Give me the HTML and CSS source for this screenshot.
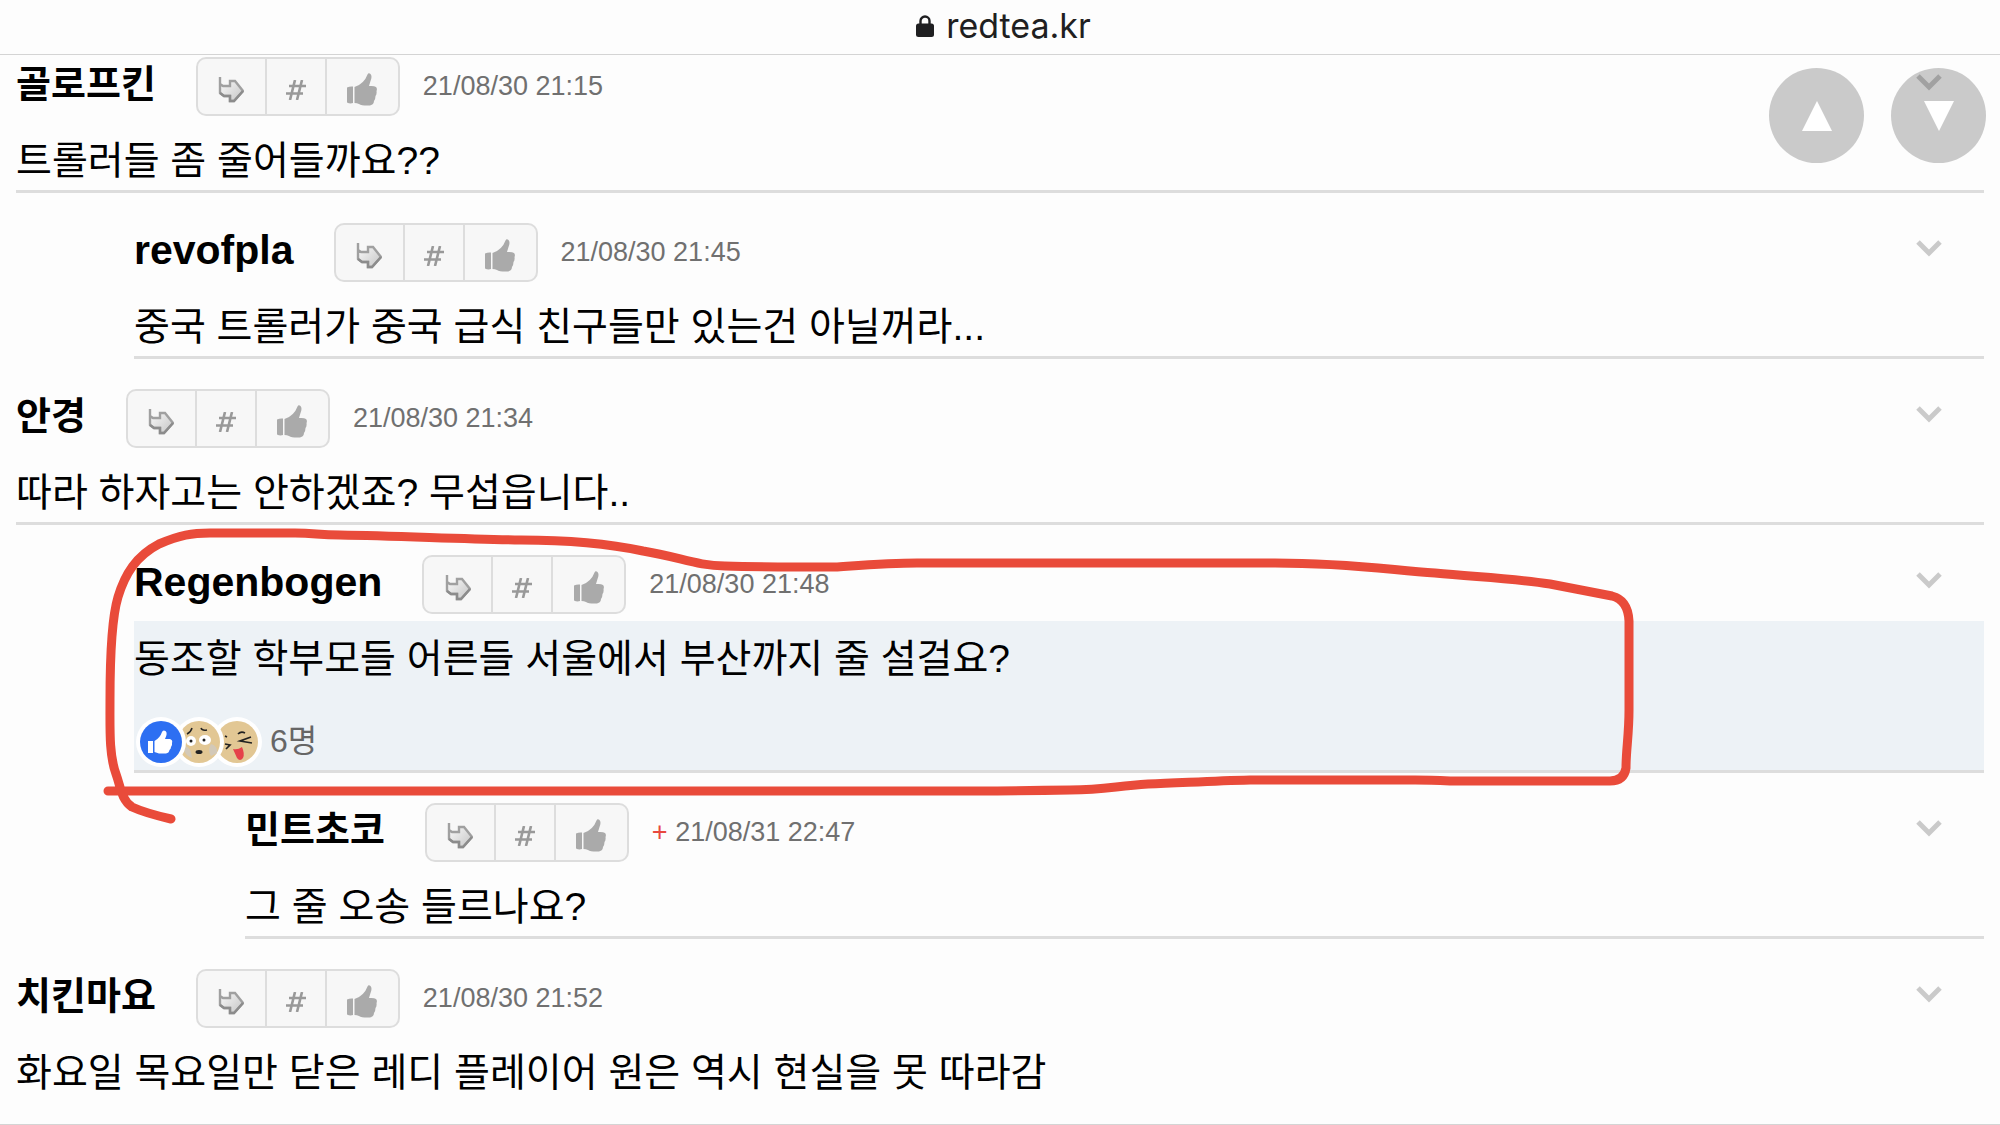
FILE: index.html
```html
<!DOCTYPE html>
<html lang="ko">
<head>
  <meta charset="UTF-8">
  <meta name="viewport" content="width=device-width, initial-scale=1.0">
  <title>redtea.kr</title>
  <link rel="stylesheet" href="styles.css">
</head>
<body>
  <!-- shared icons -->
  <svg class="sprite" aria-hidden="true">
    <defs>
      <linearGradient id="arrow-fill" x1="0" y1="0" x2="1" y2="1">
        <stop offset="0" stop-color="#ffffff"/>
        <stop offset="1" stop-color="#c4c4c4"/>
      </linearGradient>
    </defs>
    <symbol id="icon-reply" viewBox="0 0 26 26">
      <path d="M2 0V16L6 19H12V24H16L25 14L17 4H12V9H5L2 7Z" fill="url(#arrow-fill)" stroke="#a0a0a0" stroke-width="2.4"/>
      <path d="M2 16L6 19H12V24H16L25 14" fill="none" stroke="#8c8c8c" stroke-width="2.4"/>
    </symbol>
    <symbol id="icon-hash" viewBox="0 0 20 20">
      <path d="M9 0L4 20M16 0L11 20M3 6H20M0 13.500H17" fill="none" stroke="#999" stroke-width="2.6"/>
    </symbol>
    <symbol id="icon-thumb" viewBox="0 0 30 33">
      <path d="M0 14.500Q3 13 6 13.500V30Q3 31 0 29.500Z"/>
      <path d="M7.500 14Q17 11 20.500 1.500Q21.500 -.5 23.500 1Q25.500 3 23.500 8L22 13Q27 12.500 29 14Q30.500 15.500 29.500 18Q30 21 28.500 23Q28.500 26 27 28Q27 31.500 23 32.500Q15 33 12 31Q10 30 7.500 30Z"/>
    </symbol>
    <symbol id="icon-chevron" viewBox="0 0 26 17">
      <path d="M2 2L13 13L24 2" fill="none" stroke="currentColor" stroke-width="5"/>
    </symbol>
  </svg>

  <header class="address-bar">
    <svg class="lock" viewBox="0 0 18 22" aria-hidden="true">
      <path d="M4.500 10V6a4.500 4.500 0 0 1 9 0v4" fill="none" stroke="#1f1f21" stroke-width="2.4"/>
      <rect x="0" y="8.500" width="18" height="13.500" rx="2.500" fill="#1f1f21"/>
    </svg>
    <span>redtea.kr</span>
  </header>

  <nav class="scroll-buttons">
    <button type="button" aria-label="위로"><svg viewBox="0 0 30 30"><path d="M15 0L30 30H0Z"/></svg></button>
    <button type="button" aria-label="아래로"><svg viewBox="0 0 30 30"><path d="M0 0H30L15 30Z"/></svg></button>
  </nav>

  <main class="comments">
    <article class="comment">
      <div class="comment-head">
        <strong class="name">골로프킨</strong>
        <div class="actions">
          <button type="button" class="reply" aria-label="답글"><svg><use href="#icon-reply"/></svg></button>
          <button type="button" class="hash" aria-label="링크"><svg><use href="#icon-hash"/></svg></button>
          <button type="button" class="like" aria-label="추천"><svg><use href="#icon-thumb"/></svg></button>
        </div>
        <time>21/08/30 21:15</time>
        <button type="button" class="more" aria-label="더보기"><svg><use href="#icon-chevron"/></svg></button>
      </div>
      <div class="comment-body"><p>트롤러들 좀 줄어들까요??</p></div>
    </article>

    <article class="comment depth-1">
      <div class="comment-head">
        <strong class="name" lang="en">revofpla</strong>
        <div class="actions">
          <button type="button" class="reply" aria-label="답글"><svg><use href="#icon-reply"/></svg></button>
          <button type="button" class="hash" aria-label="링크"><svg><use href="#icon-hash"/></svg></button>
          <button type="button" class="like" aria-label="추천"><svg><use href="#icon-thumb"/></svg></button>
        </div>
        <time>21/08/30 21:45</time>
        <button type="button" class="more" aria-label="더보기"><svg><use href="#icon-chevron"/></svg></button>
      </div>
      <div class="comment-body"><p>중국 트롤러가 중국 급식 친구들만 있는건 아닐꺼라...</p></div>
    </article>

    <article class="comment">
      <div class="comment-head">
        <strong class="name">안경</strong>
        <div class="actions">
          <button type="button" class="reply" aria-label="답글"><svg><use href="#icon-reply"/></svg></button>
          <button type="button" class="hash" aria-label="링크"><svg><use href="#icon-hash"/></svg></button>
          <button type="button" class="like" aria-label="추천"><svg><use href="#icon-thumb"/></svg></button>
        </div>
        <time>21/08/30 21:34</time>
        <button type="button" class="more" aria-label="더보기"><svg><use href="#icon-chevron"/></svg></button>
      </div>
      <div class="comment-body"><p>따라 하자고는 안하겠죠? 무섭읍니다..</p></div>
    </article>

    <article class="comment depth-1">
      <div class="comment-head">
        <strong class="name" lang="en">Regenbogen</strong>
        <div class="actions">
          <button type="button" class="reply" aria-label="답글"><svg><use href="#icon-reply"/></svg></button>
          <button type="button" class="hash" aria-label="링크"><svg><use href="#icon-hash"/></svg></button>
          <button type="button" class="like" aria-label="추천"><svg><use href="#icon-thumb"/></svg></button>
        </div>
        <time>21/08/30 21:48</time>
        <button type="button" class="more" aria-label="더보기"><svg><use href="#icon-chevron"/></svg></button>
      </div>
      <div class="comment-body popular">
        <p>동조할 학부모들 어른들 서울에서 부산까지 줄 설걸요?</p>
        <div class="reactions">
          <svg class="face" viewBox="0 0 50 50" aria-hidden="true">
            <circle cx="25" cy="25" r="25" fill="#fff"/>
            <circle cx="25" cy="25" r="21" fill="#2d6ff2"/>
            <path d="M12 24H17V36H12Z" fill="#fff"/>
            <path d="M18.500 24Q24 21 26 15Q27 12.500 29.500 14Q32 16 29 22H34Q37 23 36 26Q36.500 28 35 30Q35 32 33.500 33Q33 36 30 36.500H23L18.500 35Z" fill="#fff"/>
          </svg>
          <svg class="face" viewBox="0 0 50 50" aria-hidden="true">
            <circle cx="25" cy="25" r="25" fill="#fff"/>
            <circle cx="25" cy="25" r="21" fill="#e2c794"/>
            <path d="M37 27Q44 29 43 36L37 39Q33 33 37 27ZM11 29Q17 30 18 41Q11 38 10 33Z" fill="#d3c9b8"/>
            <ellipse cx="17" cy="24" rx="5" ry="5" fill="#fff"/>
            <ellipse cx="31" cy="23" rx="6" ry="5" fill="#fff"/>
            <circle cx="17" cy="24" r="1.500" fill="#222"/>
            <circle cx="30" cy="23" r="1.500" fill="#222"/>
            <path d="M13 17Q17 15 18 11M27 11Q28 14 33 13" fill="none" stroke="#222" stroke-width="1.500"/>
            <ellipse cx="25" cy="35" rx="3.500" ry="2" fill="#222"/>
          </svg>
          <svg class="face" viewBox="0 0 50 50" aria-hidden="true">
            <circle cx="25" cy="25" r="25" fill="#fff"/>
            <circle cx="25" cy="25" r="21" fill="#e2c794"/>
            <path d="M26 17Q29 14 33 16M39 20L28 24L40 26M13 19L15 20M13 27L18 28L14 32" fill="none" stroke="#222" stroke-width="1.700"/>
            <path d="M21 32Q26 33 30 30Q33 37 31 41Q28 45 25 41Z" fill="#e5414a"/>
          </svg>
          <span>6명</span>
        </div>
      </div>
      <!-- hand-drawn marker around this comment -->
      <svg class="marker" viewBox="100 520 1560 310" aria-hidden="true">
        <path d="M171 819Q145 813 132 807C121 799 121 788 116 774C109 755 110 730 110 700C110 655 112 617 118 597C125 574 136 556 159 544C180 535 192 533 210 533H295C315 533 318 535 340 535C400 536 460 539 521 540C570 540 610 544 643 551C680 557 697 566 725 566C760 567 800 567 835 567C865 565 890 563 917 563H1275C1350 563 1390 570 1435 573C1475 577 1510 578 1550 584L1612 596Q1628 600 1629 621V710C1629 735 1626 750 1626 768Q1624 781 1610 781H1450C1430 780 1430 780 1415 780H1250C1210 781 1180 783 1148 784C1115 786 1105 790 1070 790C1010 791 980 791 930 791H108"/>
      </svg>
    </article>

    <article class="comment depth-2">
      <div class="comment-head">
        <strong class="name">민트초코</strong>
        <div class="actions">
          <button type="button" class="reply" aria-label="답글"><svg><use href="#icon-reply"/></svg></button>
          <button type="button" class="hash" aria-label="링크"><svg><use href="#icon-hash"/></svg></button>
          <button type="button" class="like" aria-label="추천"><svg><use href="#icon-thumb"/></svg></button>
        </div>
        <time><span class="new">+</span> 21/08/31 22:47</time>
        <button type="button" class="more" aria-label="더보기"><svg><use href="#icon-chevron"/></svg></button>
      </div>
      <div class="comment-body"><p>그 줄 오송 들르나요?</p></div>
    </article>

    <article class="comment">
      <div class="comment-head">
        <strong class="name">치킨마요</strong>
        <div class="actions">
          <button type="button" class="reply" aria-label="답글"><svg><use href="#icon-reply"/></svg></button>
          <button type="button" class="hash" aria-label="링크"><svg><use href="#icon-hash"/></svg></button>
          <button type="button" class="like" aria-label="추천"><svg><use href="#icon-thumb"/></svg></button>
        </div>
        <time>21/08/30 21:52</time>
        <button type="button" class="more" aria-label="더보기"><svg><use href="#icon-chevron"/></svg></button>
      </div>
      <div class="comment-body"><p>화요일 목요일만 닫은 레디 플레이어 원은 역시 현실을 못 따라감</p></div>
    </article>
  </main>
</body>
</html>
```

FILE: styles.css
```css
* {
  box-sizing: border-box;
}
body {
  margin: 0;
  background-color: #fdfdfd;
  color: #000;
  font-family: "Liberation Sans", "Noto Sans CJK KR", sans-serif;
}
button {
  padding: 0;
  border: none;
  background: none;
  cursor: pointer;
}
svg {
  display: block;
}
.sprite {
  position: absolute;
  width: 0;
  height: 0;
}

/* address bar */
.address-bar {
  display: flex;
  align-items: center;
  justify-content: center;
  gap: 12px;
  height: 55px;
  padding-bottom: 2px;
  padding-left: 7px;
  border-bottom: 1px solid #d4d4d4;
  color: #1f1f21;
  font-family: Inter, "Liberation Sans", sans-serif;
  font-size: 34px;
  line-height: 50px;
}
.lock {
  width: 18px;
  height: 22px;
}

/* floating up / down buttons */
.scroll-buttons {
  position: fixed;
  top: 68px;
  right: 14px;
  z-index: 2;
  display: flex;
  gap: 27px;
}
.scroll-buttons button {
  display: flex;
  align-items: center;
  justify-content: center;
  width: 95px;
  height: 95px;
  border-radius: 50%;
  background-color: rgba(0, 0, 0, 0.2);
}
.scroll-buttons svg {
  width: 30px;
  height: 30px;
  fill: #fff;
}

/* comments */
.comments {
  padding: 2px 16px 22px;
  border-bottom: 1px solid #d4d4d4;
}
.comment {
  position: relative;
  padding-top: 30px;
  border-bottom: 3px solid #ddd;
}
.comment:first-child {
  padding-top: 0;
}
.comment:last-child {
  border-bottom: none;
}
.depth-1 {
  margin-left: 118px;
}
.depth-2 {
  margin-left: 229px;
}
.comment-head {
  display: flex;
  align-items: center;
  margin-bottom: 7px;
}
.name {
  margin-right: 40px;
  padding-bottom: 6px;
  font-size: 38px;
  line-height: 50px;
}
.name:lang(en) {
  font-size: 41px;
}
.actions {
  display: flex;
  height: 59px;
  margin-right: 23px;
  border: 2px solid #ddd;
  border-radius: 10px;
  background-color: #f7f7f7;
}
.actions button {
  display: flex;
  align-items: center;
  justify-content: center;
  padding-top: 6px;
}
.actions button + button {
  border-left: 2px solid #ddd;
}
.reply {
  width: 67px;
}
.reply svg {
  width: 26px;
  height: 26px;
}
.hash {
  width: 60px;
}
.hash svg {
  width: 20px;
  height: 20px;
}
.like {
  width: 73px;
}
.like svg {
  width: 30px;
  height: 33px;
  fill: #aaa;
}
time {
  padding-bottom: 2px;
  color: #707070;
  font-size: 27px;
  line-height: 50px;
}
.new {
  color: #e8483f;
}
.more {
  margin-right: 42px;
  margin-bottom: 8px;
  margin-left: auto;
  color: rgba(0, 0, 0, 0.2);
}
.more svg {
  width: 26px;
  height: 17px;
}
.comment-body p {
  margin: 0;
  padding-top: 8px;
  font-size: 39px;
  line-height: 59px;
}
.popular {
  padding-bottom: 3px;
  background-color: #edf2f6;
}
.reactions {
  display: flex;
  align-items: center;
  height: 50px;
  margin-top: 29px;
  padding-left: 2px;
  color: #666;
  font-size: 32px;
}
.face {
  position: relative;
  width: 50px;
  height: 50px;
  margin-right: -12px;
}
.face:nth-child(1) {
  z-index: 2;
}
.face:nth-child(2) {
  z-index: 1;
}
.reactions span {
  margin-left: 20px;
  padding-bottom: 8px;
}
.marker {
  position: absolute;
  top: -5px;
  left: -34px;
  z-index: 3;
  width: 1560px;
  height: 310px;
  pointer-events: none;
}
.marker path {
  fill: none;
  stroke: #e94b3a;
  stroke-width: 9;
  stroke-linecap: round;
  stroke-linejoin: round;
}
```
